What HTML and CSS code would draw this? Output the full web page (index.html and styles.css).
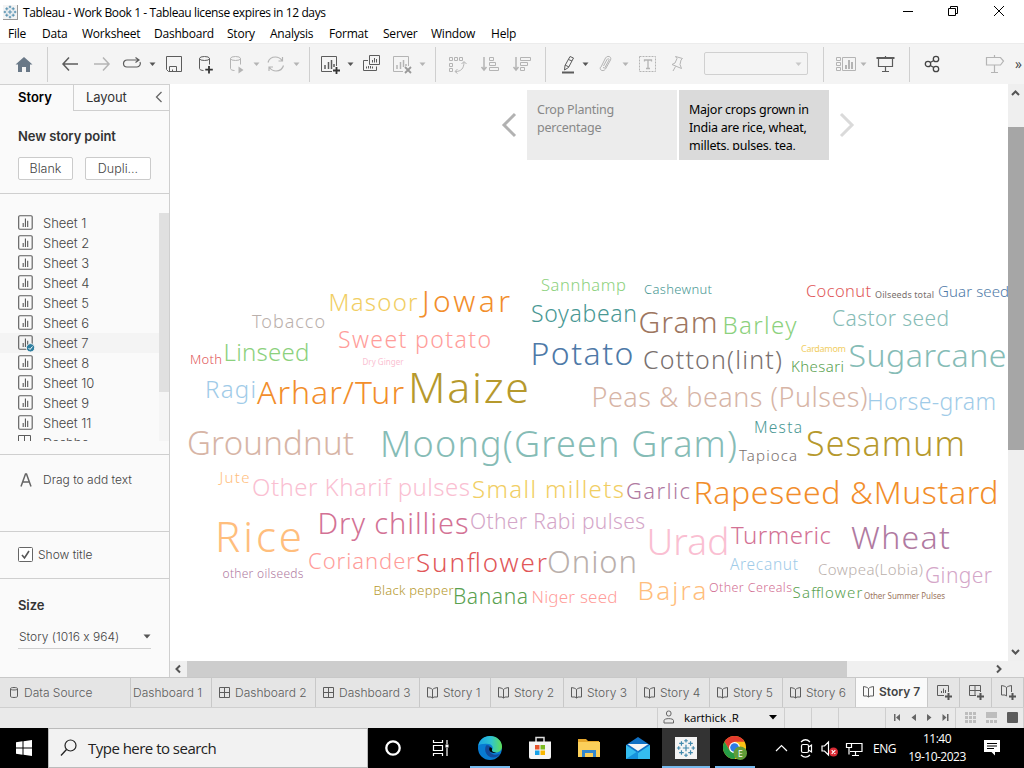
FILE: index.html
```html
<!DOCTYPE html>
<html lang="en">
<head>
<meta charset="utf-8">
<title>Tableau - Work Book 1</title>
<link rel="stylesheet" href="styles.css">
</head>
<body>
<svg class="defs" width="0" height="0">
  <defs>
    <symbol id="caret" viewBox="0 0 7 22"><path d="M0.5 9.5h6L3.5 13z" fill="currentColor"/></symbol>
    <symbol id="sheet" viewBox="0 0 16 16"><rect x="1.5" y="1.5" width="12" height="12" rx="1" fill="none" stroke="#5c5c5c"/><path d="M5.5 8v3.500M7.500 4v7.500M9.500 6v5.500" fill="none" stroke="#5c5c5c"/></symbol>
    <symbol id="dash" viewBox="0 0 14 14"><path d="M1.500 1.500h10v10h-10zM6.500 1.500v10M1.500 6.500h10" fill="none" stroke="#5c5c5c"/></symbol>
    <symbol id="book" viewBox="0 0 14 14"><path d="M6.500 3.500C5 2 3.500 2 1.500 1.500v9.500h3.500l1.500 1 1.500-1h3.500V1.500C9.500 2 8 2 6.500 3.500v8.500" fill="none" stroke="#5c5c5c"/></symbol>
    <symbol id="logo" viewBox="0 0 22 22"><path d="M11 7.500v7M7.500 11h7M11 1v4M9 3h4M11 17v4M9 19h4M3 9v4M1 11h4M19 9v4M17 11h4M6 3.500v5M3.500 6h5M16 3.500v5M13.500 6h5M6 13.500v5M3.500 16h5M16 13.500v5M13.500 16h5" fill="none" stroke="currentColor" stroke-width="1.300"/></symbol>
  </defs>
</svg>
<div class="app">
  <header class="titlebar">
    <span class="app-icon"><svg width="14" height="14"><use href="#logo"/></svg></span>
    <span class="title">Tableau - Work Book 1 - Tableau license expires in 12 days</span>
    <svg class="winctl" width="112" height="20" fill="none" stroke="#000"><path d="M3 9.500h10"/><path d="M48.500 6.500h7v7h-7zM50.500 6.500v-2h7v7h-2M94 4l10 10M104 4L94 14"/></svg>
  </header>
  <nav class="menu"><span>File</span><span>Data</span><span>Worksheet</span><span>Dashboard</span><span>Story</span><span>Analysis</span><span>Format</span><span>Server</span><span>Window</span><span>Help</span></nav>

  <div class="toolbar">
    <svg class="ic"><path d="M12 4L3.500 11.500H6V19h4v-5h4v5h4v-7.500h2.500z" fill="#697887"/></svg>
    <i class="sep"></i>
    <svg class="ic"><path d="M3 11h15M9 4.500L3 11l6 6.500" stroke-width="1.500"/></svg>
    <svg class="ic dim"><path d="M2 11h15M11 4.500l6 6.500-6 6.500" stroke-width="1.500"/></svg>
    <svg class="ic"><path d="M18 7H6a3.500 3.500 0 0 0 0 7h10a3.500 3.500 0 0 0 3-5M14.500 4.500L18 7l-3.500 2.500" stroke-width="1.200"/></svg>
    <svg class="ca"><use href="#caret"/></svg>
    <svg class="ic"><path d="M2.500 3.500h15v15h-13l-2-2zM5.500 18.500v-5h7v5M8.500 18.500v-2"/></svg>
    <svg class="ic"><ellipse cx="7.500" cy="5.500" rx="5" ry="2"/><path d="M2.500 5.500v10c0 1.200 2 2 4 2M12.500 5.500v6"/><path d="M12 13v7.500M8.300 16.700h7.500" stroke="#333" stroke-width="1.800"/></svg>
    <svg class="ic dim"><ellipse cx="6.500" cy="5.500" rx="5" ry="2"/><path d="M1.500 5.500v10c0 1.200 2 2 4 2M11.500 5.500v6"/><path d="M9.500 13.500l5 3.500-5 3.500z" fill="#b4b4b4" stroke="none"/></svg>
    <svg class="ca dim"><use href="#caret"/></svg>
    <svg class="ic dim"><path d="M2 9.500C3 6 6 4 9.500 4c3 0 5 1.500 6.500 3.500M17.500 12.500C16.500 16 13.500 18 10 18c-3 0-5-1.500-6.500-3.500M16.500 4v4h-4M3 18v-4h4" stroke-width="1.200"/></svg>
    <svg class="ca dim"><use href="#caret"/></svg>
    <i class="sep"></i>
    <svg class="ic"><path d="M12 18.500H1.500v-15h15V13"/><path d="M5 12v4M8.500 9v7M11.500 7v9M14 11v3" stroke-width="1.500"/><path d="M16.500 14v7M13 17.500h7" stroke="#333" stroke-width="1.800"/></svg>
    <svg class="ca"><use href="#caret"/></svg>
    <svg class="ic"><path d="M7.500 2.500h10v9h-10zM6 7.500H1.500v10h13v-4M10.500 9.500V7M12.500 9.500V5M14.500 9.500V6M4.500 15.500v-2M6.500 15.500V13M8.500 15.500V13M10.500 15.500v-2"/></svg>
    <svg class="ic dim"><path d="M11 18.500H1.500v-15h15V13"/><path d="M5 12v4M8.500 9v7M11.500 7v7M14 11v2" stroke-width="1.500"/><path d="M13 14l6 6M19 14l-6 6" stroke="#999" stroke-width="1.800"/></svg>
    <svg class="ca dim"><use href="#caret"/></svg>
    <i class="sep"></i>
    <svg class="ic dim"><path d="M1.500 4.500h3v3h-3zM6.500 4.500h3v3h-3zM11.500 4.500h3v3h-3zM1.500 10.500h3v3h-3zM1.500 15.500h3v3h-3zM7.500 18.500C13 18.500 16 15.500 16 9M9.500 16l-2.500 2.500 2.500 2M13.500 11L16 8.500l2.500 2.500"/></svg>
    <svg class="ic dim"><path d="M4 4v13M1.500 14L4 17l2.500-3" stroke-width="1.500"/><path d="M9.500 4.500h4v3h-4zM9.500 9.500h6v3h-6zM9.500 14.500h9v3h-9z"/></svg>
    <svg class="ic dim"><path d="M4 4v13M1.500 14L4 17l2.500-3" stroke-width="1.500"/><path d="M8.500 4.500h10v3h-10zM8.500 9.500h7v3h-7zM8.500 14.500h4v3h-4z"/></svg>
    <i class="sep"></i>
    <svg class="ic"><path d="M10 3.500l3.500 1.500-5 9.500-4 2.500.5-4.500zM5 12l4 2M8.500 6.500l3.500 1.500"/><path d="M2 19.500h12" stroke-width="2"/></svg>
    <svg class="ca"><use href="#caret"/></svg>
    <svg class="ic dim"><path d="M3 14L7.500 5c2-3 6.500-1.500 5 2L7.500 16c-2 3-6.500 1.500-5-2M5.500 13L9 6.500c1-1.500 2.500-.5 2 .5l-4 7.500c-.5 1.500-2 .5-1.500-.5"/></svg>
    <svg class="ca dim"><use href="#caret"/></svg>
    <svg class="ic dim"><path d="M1.500 3.500h16v15h-16z" stroke-dasharray="2 1"/><path d="M6.500 8.500v-1.500h7v1.500M10 7v8M8 15.500h4" stroke-width="1.300"/></svg>
    <svg class="ic dim"><path d="M6.500 3.500l7 2-1.500 1.500-1 4.500 1.500 4-9.500-4 3-1.500 2-4.500zM6.500 13.500L4 18"/></svg>
    <div class="select"><svg class="ca"><use href="#caret"/></svg></div>
    <i class="sep"></i>
    <svg class="ic dim wide"><path d="M1.500 4.500h4v3h-4zM1.500 9.500h4v3h-4zM1.500 14.500h4v3h-4zM7.500 4.500h13v13h-13z"/><path d="M11 12v4M14 7v9M17 9v7" stroke-width="2"/></svg>
    <svg class="ca dim"><use href="#caret"/></svg>
    <svg class="ic"><path d="M1.500 5h18" stroke-width="2"/><path d="M3.500 5.500v8h14v-8M10.500 3v2M10.500 14v4.500M7 18.500h7" stroke-width="1.200"/></svg>
    <i class="sep"></i>
    <svg class="ic"><g stroke="#444" stroke-width="1.300"><circle cx="5" cy="11" r="2.700"/><circle cx="13" cy="6" r="2.700"/><circle cx="13" cy="16" r="2.700"/><path d="M7.300 9.500l3.500-2M7.300 12.500l3.500 2"/></g></svg>
    <svg class="ic dim"><path d="M10.500 2v2.500M2.500 4.500h14l3 3.500-3 4h-14zM10.500 12v7.500M7 19.500h7" stroke-width="1.200"/></svg>
    <span class="more">»</span>
  </div>

  <main class="main">
    <aside class="side">
      <div class="side-tabs"><b>Story</b><span>Layout</span><svg width="8" height="12"><path d="M6.500 1L1.500 6l5 5" fill="none" stroke="#666" stroke-width="1.300"/></svg></div>
      <section class="points">
        <h3>New story point</h3>
        <div class="buttons"><button class="blank">Blank</button><button class="dup">Dupli...</button></div>
      </section>
      <section class="sheets">
        <ul>
          <li><svg><use href="#sheet"/></svg>Sheet 1</li>
          <li><svg><use href="#sheet"/></svg>Sheet 2</li>
          <li><svg><use href="#sheet"/></svg>Sheet 3</li>
          <li><svg><use href="#sheet"/></svg>Sheet 4</li>
          <li><svg><use href="#sheet"/></svg>Sheet 5</li>
          <li><svg><use href="#sheet"/></svg>Sheet 6</li>
          <li class="on"><svg><use href="#sheet"/><circle cx="13.500" cy="13.800" r="4.200" fill="#2f7fa0" stroke="#f4f4f4"/><path d="M11.500 14l1.500 1.500 2.500-3" fill="none" stroke="#fff"/></svg>Sheet 7</li>
          <li><svg><use href="#sheet"/></svg>Sheet 8</li>
          <li><svg><use href="#sheet"/></svg>Sheet 10</li>
          <li><svg><use href="#sheet"/></svg>Sheet 9</li>
          <li><svg><use href="#sheet"/></svg>Sheet 11</li>
          <li><svg><path d="M1.500 14V1.500h12V14M7.500 1.500V14" fill="none" stroke="#5c5c5c"/></svg>Dashbo</li>
        </ul>
        <div class="side-scroll"><i></i></div>
      </section>
      <section class="drag"><svg width="12" height="14"><path d="M1 13.500L5.500 1h1L11 13.500M3 9h6" fill="none" stroke="#666" stroke-width="1.500"/></svg><span>Drag to add text</span></section>
      <section class="show"><svg width="15" height="15"><rect x=".5" y=".5" width="14" height="14" rx="1" fill="#fff" stroke="#666"/><path d="M4 8l2.500 3L11 4" fill="none" stroke="#555" stroke-width="1.600"/></svg><span>Show title</span></section>
      <section class="size"><h3>Size</h3><div class="size-select"><span>Story (1016 x 964)</span><svg width="8" height="5"><path d="M.5.500h7L4 4.500z" fill="#555"/></svg></div></section>
    </aside>

    <div class="view">
      <div class="story">
        <div class="navigator">
          <svg width="16" height="26"><path d="M14 2L3 13l11 11" fill="none" stroke="#b2b2b2" stroke-width="3"/></svg>
          <div class="point"><p>Crop Planting percentage</p></div>
          <div class="point active"><p>Major crops grown in India are rice, wheat, millets, pulses, tea,</p></div>
          <svg width="16" height="26"><path d="M2 2l11 11L2 24" fill="none" stroke="#dadada" stroke-width="3"/></svg>
        </div>
        <svg class="cloud" width="838" height="400" viewBox="170 260 838 400" font-family="Noto Sans, sans-serif" font-weight="300">
          <text x="328.500" y="311" font-size="24" textLength="89" fill="#f1ce63">Masoor</text>
          <text x="422" y="312" font-size="30" textLength="88" fill="#f28e2b">Jowar</text>
          <text x="252" y="328" font-size="18" textLength="73" fill="#bab0ac">Tobacco</text>
          <text x="338" y="348" font-size="23" textLength="153" fill="#ff9d9a">Sweet potato</text>
          <text x="223.500" y="361" font-size="24" textLength="86" fill="#8cd17d">Linseed</text>
          <text x="190" y="364" font-size="13" textLength="32" fill="#e15759">Moth</text>
          <text x="362.500" y="365" font-size="8" textLength="41" fill="#fabfd2" font-weight="400">Dry Ginger</text>
          <text x="205" y="398" font-size="24" textLength="51" fill="#a0cbe8">Ragi</text>
          <text x="257" y="404" font-size="32" textLength="147" fill="#f28e2b">Arhar/Tur</text>
          <text x="408" y="403" font-size="43" textLength="121" fill="#b6992d">Maize</text>
          <text x="187" y="455" font-size="33" textLength="167" fill="#d7b5a6">Groundnut</text>
          <text x="380" y="457" font-size="36" textLength="357" fill="#86bcb6">Moong(Green Gram)</text>
          <text x="806" y="456" font-size="34" textLength="159" fill="#b6992d">Sesamum</text>
          <text x="541" y="291" font-size="16.500" textLength="85" fill="#8cd17d">Sannhamp</text>
          <text x="644" y="294" font-size="13" textLength="68" fill="#499894">Cashewnut</text>
          <text x="806" y="297" font-size="16.500" textLength="65" fill="#e15759">Coconut</text>
          <text x="875" y="298" font-size="9" textLength="59" fill="#79706e" font-weight="400">Oilseeds total</text>
          <text x="938" y="297" font-size="15" textLength="71" fill="#4e79a7">Guar seed</text>
          <text x="531" y="322" font-size="23" textLength="106" fill="#499894">Soyabean</text>
          <text x="638.500" y="333" font-size="30" textLength="79" fill="#9d7660">Gram</text>
          <text x="722.500" y="334" font-size="24" textLength="74" fill="#8cd17d">Barley</text>
          <text x="832" y="326" font-size="21" textLength="117" fill="#86bcb6">Castor seed</text>
          <text x="530.500" y="365" font-size="32" textLength="103" fill="#4e79a7">Potato</text>
          <text x="643" y="369" font-size="25" textLength="139" fill="#79706e">Cotton(lint)</text>
          <text x="801" y="352" font-size="9" textLength="45" fill="#f1ce63" font-weight="400">Cardamom</text>
          <text x="791" y="372" font-size="15" textLength="53" fill="#59a14f">Khesari</text>
          <text x="848.500" y="367" font-size="32" textLength="158" fill="#86bcb6">Sugarcane</text>
          <text x="591.500" y="407" font-size="27" textLength="276" fill="#d7b5a6">Peas &amp; beans (Pulses)</text>
          <text x="867" y="410" font-size="23" textLength="129" fill="#a0cbe8">Horse-gram</text>
          <text x="754" y="433" font-size="15.500" textLength="48" fill="#499894">Mesta</text>
          <text x="739" y="461" font-size="15" textLength="58" fill="#79706e">Tapioca</text>
          <text x="219.500" y="483" font-size="15" textLength="30" fill="#ffbe7d">Jute</text>
          <text x="252" y="495.500" font-size="24" textLength="218" fill="#fabfd2">Other Kharif pulses</text>
          <text x="472" y="498" font-size="24" textLength="152" fill="#f1ce63">Small millets</text>
          <text x="626" y="499" font-size="22" textLength="64" fill="#b07aa1">Garlic</text>
          <text x="693.500" y="504" font-size="32" textLength="305" fill="#f28e2b">Rapeseed &amp;Mustard</text>
          <text x="215" y="552" font-size="42" textLength="87" fill="#ffbe7d">Rice</text>
          <text x="317.500" y="534" font-size="29" textLength="151" fill="#d37295">Dry chillies</text>
          <text x="470" y="529" font-size="21" textLength="175" fill="#d4a6c8">Other Rabi pulses</text>
          <text x="646.500" y="555" font-size="37" textLength="83" fill="#fabfd2">Urad</text>
          <text x="731" y="544" font-size="24" textLength="100" fill="#d37295">Turmeric</text>
          <text x="851" y="549" font-size="32" textLength="99" fill="#b07aa1">Wheat</text>
          <text x="308" y="569" font-size="22" textLength="107" fill="#ff9d9a">Coriander</text>
          <text x="416" y="572" font-size="26" textLength="131" fill="#e15759">Sunflower</text>
          <text x="547" y="573" font-size="31" textLength="90" fill="#bab0ac">Onion</text>
          <text x="730" y="570" font-size="15.500" textLength="68" fill="#a0cbe8">Arecanut</text>
          <text x="818" y="575" font-size="15" textLength="105" fill="#bab0ac">Cowpea(Lobia)</text>
          <text x="925" y="583" font-size="21" textLength="67" fill="#d4a6c8">Ginger</text>
          <text x="222.500" y="578" font-size="12" textLength="81" fill="#b07aa1">other oilseeds</text>
          <text x="373.500" y="595" font-size="13" textLength="80" fill="#b6992d">Black pepper</text>
          <text x="453" y="604" font-size="21" textLength="75" fill="#59a14f">Banana</text>
          <text x="531.500" y="603" font-size="17" textLength="86" fill="#ff9d9a">Niger seed</text>
          <text x="637.500" y="600" font-size="26" textLength="69" fill="#ffbe7d">Bajra</text>
          <text x="709" y="592" font-size="12.500" textLength="83" fill="#d37295">Other Cereals</text>
          <text x="792.500" y="598" font-size="15" textLength="70" fill="#59a14f">Safflower</text>
          <text x="864" y="599" font-size="8" textLength="81" fill="#9d7660" font-weight="400">Other Summer Pulses</text>
        </svg>
      </div>
      <div class="vscroll"><svg width="16" height="16"><path d="M4 11l3.500-3.500L11 11" fill="none" stroke="#555" stroke-width="2"/></svg><i></i><svg class="down" width="16" height="16"><path d="M4 5l3.500 3.500L11 5" fill="none" stroke="#555" stroke-width="2"/></svg></div>
      <div class="hscroll"><svg width="17" height="16"><path d="M10 4.500L6.500 8l3.500 3.500" fill="none" stroke="#555" stroke-width="2"/></svg><i></i><svg class="right" width="17" height="16"><path d="M6 4.500L9.500 8 6 11.500" fill="none" stroke="#555" stroke-width="2"/></svg></div>
    </div>
  </main>

  <div class="tabs">
    <div class="src"><svg><path d="M2.500 2.500c0-1.300 7-1.300 7 0v8c0 1.300-7 1.300-7 0zM2.500 3c0 1.300 7 1.300 7 0" fill="none" stroke="#5c5c5c"/></svg>Data Source</div>
    <div class="cut">Dashboard 1</div>
    <div class="d"><svg><use href="#dash"/></svg>Dashboard 2</div>
    <div class="d"><svg><use href="#dash"/></svg>Dashboard 3</div>
    <div><svg><use href="#book"/></svg>Story 1</div>
    <div><svg><use href="#book"/></svg>Story 2</div>
    <div><svg><use href="#book"/></svg>Story 3</div>
    <div><svg><use href="#book"/></svg>Story 4</div>
    <div><svg><use href="#book"/></svg>Story 5</div>
    <div><svg><use href="#book"/></svg>Story 6</div>
    <div class="current"><svg><use href="#book"/></svg>Story 7</div>
    <div class="new"><svg><path d="M8 11.500H1.500v-10h11V8M5.500 9V7M7.500 9V4.500M9.500 9V6" fill="none" stroke="#5c5c5c"/><path d="M12.500 9v7M9 12.500h7" stroke="#555" stroke-width="2"/></svg></div>
    <div class="new"><svg><path d="M8 11.500H1.500v-10h11V8M7 1.500v10M1.500 6.500h11" fill="none" stroke="#5c5c5c"/><path d="M12.500 9v7M9 12.500h7" stroke="#555" stroke-width="2"/></svg></div>
    <div class="new"><svg><path d="M6.500 12l-1.500-1H1.500V1.500c2 .5 3.500.5 5 2C8 2 9.500 2 11.500 1.500V8M6.500 3.500V12" fill="none" stroke="#5c5c5c"/><path d="M12.500 9v7M9 12.500h7" stroke="#555" stroke-width="2"/></svg></div>
  </div>

  <div class="status">
    <span></span>
    <div class="user"><svg width="12" height="15"><rect x="3.500" y="1" width="4.500" height="5" rx="2" fill="none" stroke="#666"/><path d="M1 13V10.500c0-2.500 9.500-2.500 9.500 0V13z" fill="none" stroke="#666"/></svg><span>karthick .R</span><svg width="8" height="5"><path d="M0 0h8L4 4.500z"/></svg></div>
    <span></span><span></span><span></span>
    <svg width="70" height="20" fill="#666"><path d="M8 6h1.500v7H8zM14 6v7l-4-3.500zM30 6v7l-4.500-3.500zM41 6v7l4.500-3.500zM56.500 6v7l4-3.500zM61 6h1.500v7H61z"/></svg>
    <svg width="67" height="20"><g fill="#bdbdbd"><path d="M8 4h3v3H8zM12 4h3v3h-3zM16 4h3v3h-3zM8 8h3v3H8zM12 8h3v3h-3zM16 8h3v3h-3zM8 12h3v3H8zM12 12h3v3h-3zM16 12h3v3h-3zM29 4h11v6H29zM29 12h3v3h-3zM33 12h3v3h-3zM37 12h3v3h-3z"/></g><rect x="50" y="4" width="11" height="11" rx="1" fill="#5c5c5c"/></svg>
  </div>

  <footer class="taskbar">
    <div class="start"><svg width="16" height="16" fill="#fff"><path d="M0 2.300L6.500 1.300v6.200H0zM7.500 1.200L16 0v7.500H7.500zM0 8.500h6.500v6.200L0 13.700zM7.500 8.500H16V16l-8.500-1.200z"/></svg></div>
    <div class="search"><svg width="18" height="18"><circle cx="10.500" cy="6.500" r="5.500" fill="none" stroke="#222" stroke-width="1.200"/><path d="M6.500 10.500L1 16.500" stroke="#222" stroke-width="1.300"/></svg><span>Type here to search</span></div>
    <div class="apps">
      <div><svg viewBox="0 0 24 24"><circle cx="12" cy="12" r="6.700" fill="none" stroke="#fff" stroke-width="2.300"/></svg></div>
      <div><svg viewBox="0 0 24 24"><path d="M3.500 4v2.500h9V4M3.500 20v-2.500h9V20M3.500 9.500h9v5h-9zM17 4v4M17 12v8" fill="none" stroke="#fff" stroke-width="1.200"/><path d="M15.500 8.500h3v3h-3z" fill="#fff"/></svg></div>
      <div class="open"><svg viewBox="0 0 24 24"><defs><linearGradient id="eg" x2="1"><stop stop-color="#19a4e6"/><stop offset=".55" stop-color="#30c4cf"/><stop offset="1" stop-color="#60df54"/></linearGradient></defs><circle cx="12" cy="12" r="12" fill="#087bd2"/><path d="M.2 10C1 4 6 0 12 0c7 0 12 5 12 10.500 0 3.500-2.500 6-6 6-3 0-4.500-1.200-4-2.500 1.500-1.500 1-5.500-3.500-6C6 7.500 1 8 .2 10z" fill="url(#eg)"/><path d="M8 9.500c-2.500 5 .5 12.500 8 12 3-.3 5-2 6.500-4-3 2-11 2-11-4 0-1 .5-2 1-2.500C11.500 9.500 9.500 9 8 9.500z" fill="#124a9c"/><path d="M11.500 11.500c1.500-.5 3 .5 2.500 2.500-.5 1.300 1.500 2.600 4.500 2.500-4 1.500-8.500-1-7-5z" fill="#000"/></svg></div>
      <div><svg viewBox="0 0 24 24"><path d="M8 6V1.500h8V6" fill="none" stroke="#ddd" stroke-width="1.500"/><path d="M1 5.500h22V21q0 2-2 2H3q-2 0-2-2z" fill="#f4f4f4"/><path d="M7 9h4.500v4.500H7z" fill="#e5532b"/><path d="M12.500 9H17v4.500h-4.500z" fill="#7cba20"/><path d="M7 14.500h4.500V19H7z" fill="#18a2e8"/><path d="M12.500 14.500H17V19h-4.500z" fill="#f8b700"/></svg></div>
      <div><svg viewBox="0 0 24 24"><path d="M1 3h8l2 2h11v5H1z" fill="#e7a82c"/><path d="M1 6h22v15H1z" fill="#fbcf5a"/><path d="M5 21v-7h14v7h-3v-4H8v4z" fill="#3488ce"/></svg></div>
      <div><svg viewBox="0 0 24 24"><path d="M0 9l12-8 12 8v14H0z" fill="#1171c4"/><path d="M1.500 8h21L12 15z" fill="#f6f6f6"/><path d="M0 9l12 8 12-8v14H0z" fill="#35bdf0"/><path d="M0 23l12-8v8z" fill="#1692dc"/></svg></div>
      <div class="open focused"><svg viewBox="0 0 24 24"><rect x="1" y="1" width="22" height="22" fill="#f4f4f4"/><use href="#logo" x="2" y="2" width="20" height="20" color="#4289ad"/></svg></div>
      <div class="open chrome"><svg viewBox="0 0 25 25"><circle cx="12" cy="12" r="12" fill="#fbc116"/><path d="M1.600 6A12 12 0 0 1 22.400 6H12L7 15z" fill="#e33b2e"/><path d="M1.600 6A12 12 0 0 0 12 24l5-9H7z" fill="#269c46"/><circle cx="12" cy="12" r="5.700" fill="#fff"/><circle cx="12" cy="12" r="4.500" fill="#2c7be5"/><circle cx="18" cy="18" r="7" fill="#609c39"/><text x="18" y="21.500" font-size="9" font-family="Open Sans, sans-serif" fill="#fff" text-anchor="middle">E</text></svg></div>
    </div>
    <div class="tray">
      <svg width="98" height="24" fill="none" stroke="#fff" stroke-width="1.200"><path d="M1 15l5.500-5.500L12 15"/><rect x="26.500" y="8.500" width="7" height="8" rx="1.500"/><path d="M33.500 11l3-2v7l-3-2M26 6c3-3 6-3 9 0M26 19c3 3 6 3 9 0M47 10h2.500l4-4v13l-4-4H47z"/><circle cx="58.500" cy="16" r="4.500" fill="#d92b35" stroke="none"/><path d="M56.700 14.200l3.600 3.600M60.300 14.200l-3.600 3.600M75 7.500h12v8H75M80.500 15.500v4M77 19.500h7M71.500 7.500h5v4h-5zM74 11.500v7"/></svg>
      <span class="lang">ENG</span>
      <div class="clock"><span>11:40</span><span>19-10-2023</span></div>
      <svg width="18" height="18"><path d="M1 1h16v12h-5v3.500L8.500 13H1z" fill="#fff"/><path d="M4 4.500h10M4 7h10M4 9.500h7" stroke="#000"/></svg>
    </div>
  </footer>
</div>
</body>
</html>
```
FILE: styles.css
```css
* { box-sizing: border-box; }
body { margin: 0; background: #fff; font-family: "Open Sans", "Noto Sans", sans-serif; font-size: 12px; color: #000; }
.defs { display: block; height: 0; }
.app { width: 1024px; height: 768px; display: flex; flex-direction: column; overflow: hidden; }
svg { flex: none; }

.titlebar { height: 24px; display: flex; align-items: center; padding-left: 3px; }
.app-icon { width: 15px; height: 15px; display: flex; color: #3a80a5; background: #f4f4f4; border-right: 1px solid #999; border-bottom: 1px solid #999; }
.title { margin-left: 5px; letter-spacing: -0.38px; white-space: nowrap; }
.winctl { margin-left: auto; margin-right: 12px; }
.menu { height: 19px; display: grid; grid-template-columns: 34px 40px 72px 73px 43px 59px 54px 48px 60px 60px; padding-left: 8px; letter-spacing: -0.22px; line-height: 20px; }

.toolbar { height: 41px; background: #f4f4f4; border-top: 1px solid #ececec; padding-left: 12px; display: grid; align-items: start; grid-template-columns: 35px 13px 32px 29px 28px 15px 33px 32px 24px 13px 27px 16px 11px 27px 15px 30px 27px 16px 13px 32px 32px 33px 15px 22px 16px 24px 16px 31px 35px 119px 12px 25px 15px 34px 14px 61px 31px 9px; }
.ic { width: 22px; height: 22px; margin-top: 9px; fill: none; stroke: #5c5c5c; }
.ic path[fill] { stroke: none; }
.ic.dim { stroke: #b4b4b4; }
.ca { width: 7px; height: 22px; margin-top: 9px; color: #555; }
.ca.dim { color: #b4b4b4; }
.sep { width: 1px; height: 35px; margin-top: 3px; background: #cfcfcf; }
.select { width: 104px; height: 23px; margin-top: 8px; border: 1px solid #d0d0d0; border-radius: 2px; display: flex; justify-content: flex-end; padding-right: 5px; }
.select .ca { margin: 0; color: #c8c8c8; }
.more { font-size: 14px; line-height: 40px; color: #444; }

.main { height: 593px; display: flex; }
.side { width: 170px; background: #fafafa; border-right: 1px solid #cfcfcf; border-top: 1px solid #d0d0d0; color: #444; display: flex; flex-direction: column; font-family: Inter, "Open Sans", sans-serif; font-weight: 300; font-feature-settings: "calt" 0; }
.side-tabs { height: 26px; display: flex; font-size: 13px; line-height: 25px; color: #333; }
.side-tabs b { width: 73px; padding-left: 18px; color: #000; font-weight: 600; }
.side-tabs span { width: 82px; padding-left: 12px; border-left: 1px solid #cfcfcf; border-bottom: 1px solid #cfcfcf; font-weight: 400; letter-spacing: -0.1px; }
.side-tabs svg { width: 14px; height: 26px; padding-top: 6px; border-bottom: 1px solid #cfcfcf; }
.side h3 { margin: 0; font-size: 13px; line-height: 18px; font-weight: 600; color: #333; letter-spacing: -0.1px; }
.points { height: 83px; padding: 16px 18px 0; border-bottom: 1px solid #cfcfcf; }
.buttons { display: flex; gap: 12px; margin-top: 12px; }
.buttons button { height: 23px; padding: 0; background: #fff; border: 1px solid #cbcbcb; border-radius: 2px; font: inherit; font-size: 12.5px; color: #444; }
.blank { width: 55px; }
.dup { width: 66px; }
.sheets { height: 261px; padding-top: 19px; border-bottom: 1px solid #cfcfcf; display: flex; }
.sheets ul { list-style: none; margin: 0; padding: 0; width: 159px; height: 228px; overflow: hidden; }
.sheets li { height: 20px; display: flex; align-items: center; padding-left: 18px; font-size: 13px; letter-spacing: -0.05px; }
.sheets li svg { width: 18px; height: 18px; margin-left: -1px; margin-right: 8px; overflow: visible; }
.sheets use { width: 16px; height: 16px; }
.sheets .on { background: #f4f4f4; }
.side-scroll { width: 10px; height: 228px; background: #f5f5f5; }
.side-scroll i { display: block; height: 179px; background: #e0e0e0; }
.drag { height: 77px; border-bottom: 1px solid #cfcfcf; padding: 18px 0 0 20px; display: flex; align-items: flex-start; gap: 11px; line-height: 14px; }
.show { height: 47px; border-bottom: 1px solid #cfcfcf; padding: 0 0 1px 18px; display: flex; align-items: center; gap: 5px; }
.size { padding: 17px 18px 0; }
.size-select { height: 24px; margin-top: 11px; border-bottom: 1px solid #cfcfcf; display: flex; align-items: center; justify-content: space-between; padding-left: 1px; }

.view { width: 854px; display: grid; grid-template-columns: 838px 16px; grid-template-rows: 577px 16px; }
.story { overflow: hidden; background: #fff; }
.navigator { height: 176px; padding: 6px 0 0 331px; display: flex; align-items: flex-start; }
.navigator > svg { margin-top: 22px; }
.point { width: 150px; height: 70px; background: #ececec; color: #888; margin-left: 10px; padding: 11px 10px 0; font-family: "Noto Sans", sans-serif; font-size: 12.5px; line-height: 18px; letter-spacing: -0.24px; }
.point p { margin: 0; height: 49px; overflow: hidden; }
.point.active { background: #dadada; color: #000; margin-left: 2px; margin-right: 10px; }
.cloud { display: block; }
.vscroll { background: #efefef; display: flex; flex-direction: column; }
.vscroll i { height: 323px; background: #a6a6a6; margin-top: 27px; }
.vscroll .down { margin-top: auto; }
.hscroll { grid-column: 1 / 3; background: #f0f0f0; display: flex; }
.hscroll i { width: 660px; background: #cdcdcd; }
.hscroll .right { margin-left: auto; margin-right: 16px; }

.tabs { height: 31px; background: #e5e5e5; border-top: 1px solid #c8c8c8; border-bottom: 1px solid #cfcfcf; display: grid; grid-template-columns: 131px 81px 104px 104px 71px repeat(5, 73px) 72px 32px 32px 32px; font-family: Inter, sans-serif; font-size: 12px; color: #5c5c5c; font-weight: 300; }
.tabs div { border-right: 1px solid #c8c8c8; display: flex; align-items: center; padding-left: 6px; white-space: nowrap; overflow: hidden; }
.tabs svg { width: 14px; height: 14px; margin-right: 3px; }
.tabs .cut { padding-left: 2px; }
.tabs .src { padding-left: 8px; }
.tabs .src svg { margin-right: 2px; }
.tabs .current { background: #fafafa; font-weight: 600; color: #444; padding-bottom: 2px; }
.tabs .new { padding-left: 8px; }
.tabs .new svg { width: 18px; height: 17px; }

.status { height: 20px; background: #eaeaea; display: grid; grid-template-columns: 658px 127px 27px 27px 47px 71px 67px; }
.status > * { border-right: 1px solid #cfcfcf; height: 20px; }
.user { display: flex; align-items: center; padding: 0 7px 1px 5px; font-size: 11.5px; }
.user span { margin-left: 9px; margin-right: auto; letter-spacing: -0.1px; }

.taskbar { height: 40px; background: #000; color: #fff; display: flex; }
.start { width: 48px; display: flex; align-items: center; justify-content: center; }
.search { width: 320px; background: #f2f2f2; border: 1px solid #bbb; color: #222; display: flex; align-items: center; padding-left: 11px; font-size: 15px; gap: 10px; letter-spacing: -0.52px; }
.apps { display: flex; width: 394px; }
.apps div { width: 49px; height: 40px; display: flex; align-items: center; justify-content: center; border: 0 solid transparent; border-bottom-width: 2px; padding-top: 1px; }
.apps svg { width: 24px; height: 24px; }
.apps .open { width: 40px; margin: 0 5px 0 4px; border-bottom-color: #76b9ed; }
.apps .focused { width: 48px; margin: 0 1px 0 0; background: #333; }
.tray { display: flex; align-items: center; padding-left: 13px; }
.lang { width: 35px; font-size: 12px; letter-spacing: -0.5px; }
.clock { width: 58px; display: flex; flex-direction: column; align-items: center; line-height: 18px; font-size: 12px; letter-spacing: -0.5px; margin-right: 17px; white-space: nowrap; }
```
